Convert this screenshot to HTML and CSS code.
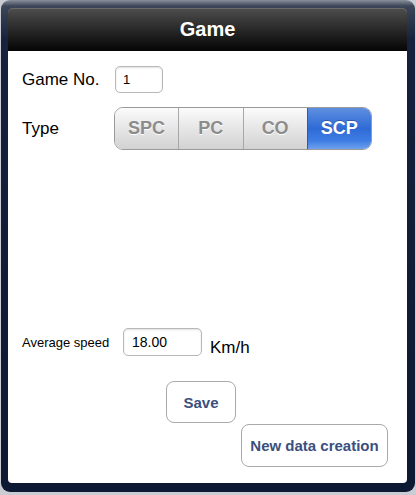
FILE: index.html
```html
<!DOCTYPE html>
<html>
<head>
<meta charset="utf-8">
<link rel="stylesheet" href="styles.css">
</head>
<body>
<div class="frame">
  <div class="header">Game</div>
  <div class="content">
    <div class="row row-game">
      <span class="label">Game No.</span>
      <div class="field field-game">1</div>
    </div>
    <div class="row row-type">
      <span class="label">Type</span>
      <div class="segmented">
        <div class="seg">SPC</div>
        <div class="seg">PC</div>
        <div class="seg">CO</div>
        <div class="seg seg-on">SCP</div>
      </div>
    </div>
    <div class="row row-speed">
      <span class="label-small">Average speed</span>
      <div class="field field-speed">18.00</div>
      <span class="unit">Km/h</span>
    </div>
    <div class="btn btn-save">Save</div>
    <div class="btn btn-new">New data creation</div>
  </div>
</div>
</body>
</html>
```
FILE: styles.css
```css
html, body {
  margin: 0;
  padding: 0;
  background: #c9ccd2;
  font-family: "Liberation Sans", Arial, sans-serif;
}
.frame {
  margin-left: 1px;
  width: 414px;
  height: 492px;
  box-sizing: border-box;
  padding: 8px 8px 9px 7px;
  border-radius: 9px;
  background: linear-gradient(to bottom, #8a909c 0px, #3c4658 6px, #16223d 40px, #0d1833 100%);
  display: flex;
  flex-direction: column;
}
.header {
  height: 43px;
  flex: none;
  border-radius: 5px 5px 0 0;
  background: linear-gradient(to bottom, #4e4e4e 0%, #2c2c2c 45%, #050505 100%);
  box-shadow: inset 0 1px 0 #6a6a6a;
  color: #fff;
  font-weight: bold;
  font-size: 20px;
  text-align: center;
  line-height: 43px;
}
.content {
  flex: 1;
  background: #fff;
  border-radius: 0 0 4px 4px;
  padding: 15px 0 0 14px;
  display: flex;
  flex-direction: column;
}
.row {
  display: flex;
  align-items: center;
}
.label {
  width: 93px;
  font-size: 17px;
  color: #000;
}
.field {
  box-sizing: border-box;
  border: 1px solid #b8b8b8;
  border-radius: 5px;
  box-shadow: inset 0 1px 2px rgba(0,0,0,0.12);
  background: #fff;
  color: #000;
  display: flex;
  align-items: center;
}
.field-game {
  width: 48px;
  height: 27px;
  font-size: 13px;
  padding-left: 7px;
}
.row-type {
  margin-top: 14px;
}
.row-type .label {
  width: 92px;
}
.segmented {
  display: flex;
  width: 258px;
  height: 43px;
  box-sizing: border-box;
  border: 1px solid #9a9a9a;
  border-radius: 9px;
  overflow: hidden;
}
.seg {
  flex: 1;
  display: flex;
  align-items: center;
  justify-content: center;
  font-weight: bold;
  font-size: 18px;
  color: #8c8c8c;
  text-shadow: 0 1px 0 #fff;
  background: linear-gradient(to bottom, #fbfbfb 0%, #e6e6e6 50%, #d2d2d2 100%);
  border-left: 1px solid #a8a8a8;
}
.seg:first-child {
  border-left: none;
}
.seg-on {
  color: #fff;
  text-shadow: 0 -1px 0 rgba(0,0,0,0.25);
  background: linear-gradient(to bottom, #5e8fe0 0%, #2f6bd6 50%, #3f7de3 80%, #6ea2ee 100%);
  border-left: 1px solid #2a5bb8;
}
.row-speed {
  margin-top: 176px;
}
.label-small {
  width: 101px;
  font-size: 13px;
  color: #000;
}
.field-speed {
  width: 79px;
  height: 28px;
  font-size: 14px;
  padding-left: 8px;
}
.unit {
  font-size: 17px;
  margin-left: 8px;
  margin-top: 12px;
}
.btn {
  box-sizing: border-box;
  border: 1px solid #a9a9a9;
  border-radius: 8px;
  background: #fff;
  color: #3a4f7e;
  font-weight: bold;
  font-size: 15px;
  display: flex;
  align-items: center;
  justify-content: center;
}
.btn-save {
  width: 70px;
  height: 42px;
  margin-top: 23px;
  margin-left: 144px;
}
.btn-new {
  width: 147px;
  height: 43px;
  margin-top: 1px;
  margin-left: 219px;
}
```
